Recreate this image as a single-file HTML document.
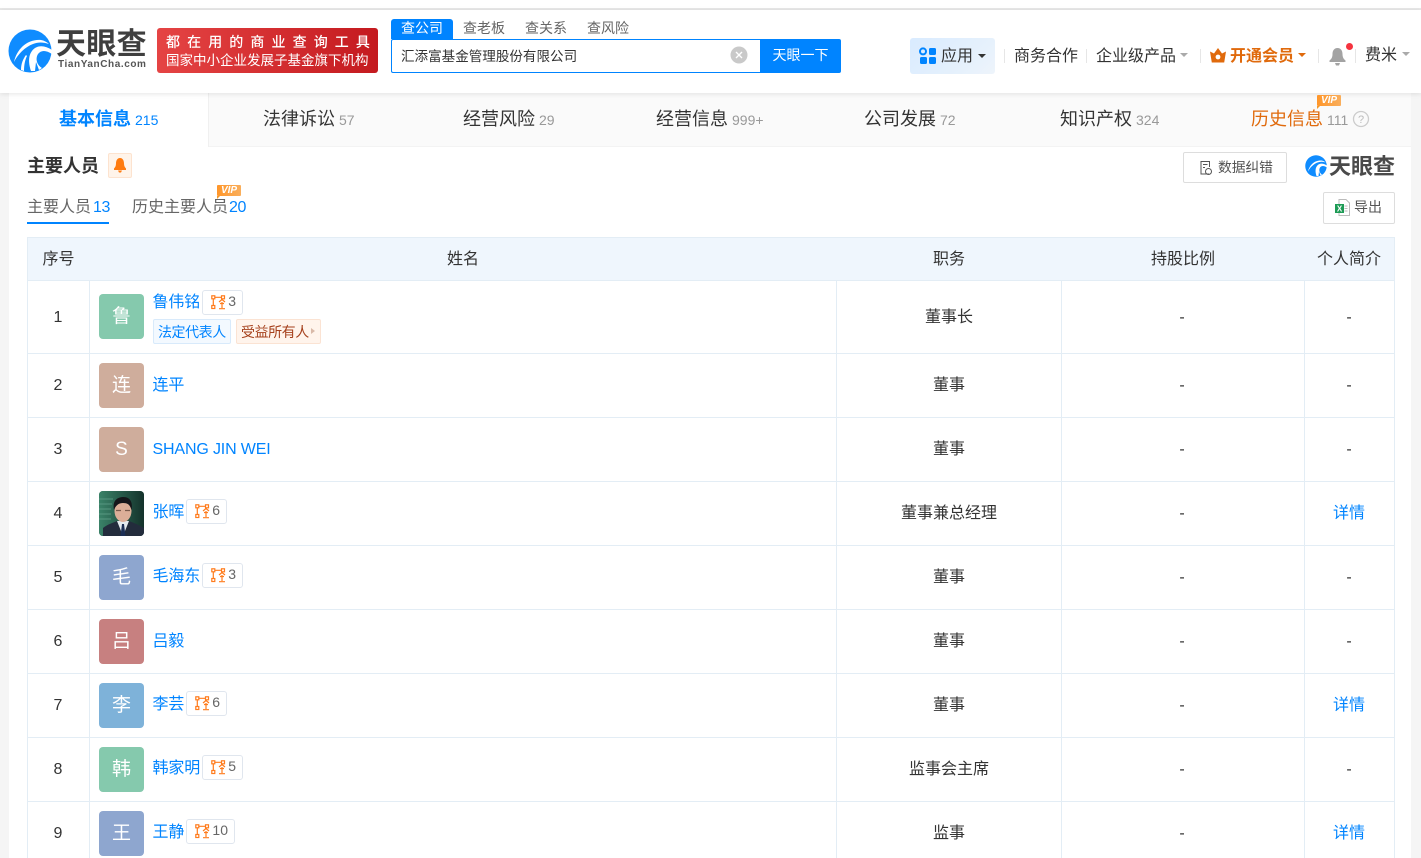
<!DOCTYPE html>
<html lang="zh"><head><meta charset="utf-8"><title>主要人员</title>
<style>
html,body{margin:0;padding:0;width:1421px;height:858px;overflow:hidden;background:#f5f5f5}
body{position:relative;font-family:"Liberation Sans","Noto Sans CJK SC",sans-serif;color:#333;font-size:16px}
.a{position:absolute;white-space:nowrap}
.t{position:absolute;white-space:nowrap;height:24px;line-height:24px;transform:translate(-50%,1px)}
.l{position:absolute;background:#e3edf5}
.av{position:absolute;left:99px;width:45px;height:45px;border-radius:4px;color:#fff;text-align:center;line-height:45px;font-size:19px;overflow:hidden}
.n{position:absolute;left:152.5px;height:24px;line-height:24px;color:#0084ff;white-space:nowrap;letter-spacing:-.15px}
.co{position:absolute;height:23px;border:1px solid #e0e6ee;border-radius:3px;background:#fff;font-size:14px;color:#666;line-height:21px;white-space:nowrap}
.co svg{position:absolute;left:8px;top:4px}
.co span{position:absolute;right:6px;top:0}
.tb{position:absolute;top:107px;height:24px;line-height:24px;font-size:18px;color:#333;white-space:nowrap}
.tb i{font-style:normal;font-size:14px;color:#999;margin-left:4px}
.tag{position:absolute;top:319px;height:23px;line-height:25px;font-size:14px;letter-spacing:-.45px;border-radius:2px;text-align:left;padding-left:4px;white-space:nowrap}
.vip{position:absolute;width:24px;height:11px;background:linear-gradient(90deg,#ff962a,#f9ae5c);border-radius:1px;color:#fff;font:italic bold 10px/11px "Liberation Sans",sans-serif;text-align:center}
.vip:after{content:"";position:absolute;left:0;bottom:-3px;border-left:3px solid #f59a2a;border-bottom:3px solid transparent}
.sep{position:absolute;top:49px;width:1px;height:14px;background:#e6e6e6}
.car{position:absolute;width:0;height:0;border:4px solid transparent;border-top:4px solid #999;border-bottom:0}
</style></head><body>

<!-- top stripes -->
<div class="a" style="left:0;top:0;width:1421px;height:8px;background:#fff"></div>
<div class="a" style="left:0;top:8px;width:1421px;height:2px;background:#e8e8e8"></div>

<!-- content panel -->
<div class="a" style="left:9px;top:93px;width:1402px;height:765px;background:#fff"></div>
<!-- tab strip -->
<div class="a" style="left:209px;top:93px;width:1202px;height:54px;background:#fafafa"></div>
<div class="a" style="left:208px;top:93px;width:1px;height:54px;background:#f0f0f0"></div>
<div class="a" style="left:209px;top:146px;width:1202px;height:1px;background:#f3f3f3"></div>

<!-- header -->
<div class="a" style="left:0;top:10px;width:1421px;height:83px;background:#fff;box-shadow:0 1px 5px rgba(0,0,0,.1)"></div>

<!-- logo -->
<svg class="a" style="left:8px;top:29px" width="44" height="44" viewBox="0 0 44 44">
<circle cx="22" cy="22" r="21.500" fill="#0f8cff"/>
<path d="M6 33C9 20 19 10 33 11C36 11.500 39 13 41 15C35 13 30 13 25 15C17 18 10 25 6 33Z" fill="#fff"/>
<path d="M23 42C20 33 20 24 27 19C32 16 38 17 44 21L44 25C38 21 33 21 30 25C27 30 29 36 34 39L31 41L28 33L27 42Z" fill="#fff"/>
<path d="M13 41C13 35 15 30 18 26L19 27C17 31 16 36 16 42Z" fill="#fff"/>
</svg>
<div class="a" style="left:56px;top:26px;font-size:30px;line-height:38px;font-weight:bold;color:#3f3f3f;letter-spacing:.3px">天眼查</div>
<div class="a" style="left:58px;top:59px;font-size:10px;line-height:12px;font-weight:bold;color:#555;letter-spacing:.58px">TianYanCha.com</div>

<!-- banner -->
<div class="a" style="left:157px;top:28px;width:221px;height:45px;border-radius:3px;background:linear-gradient(90deg,#e54444,#c41a1f)"></div>
<div class="a" style="left:166px;top:33px;font-size:14px;line-height:18px;color:#fff;letter-spacing:7.100px;font-weight:500">都在用的商业查询工具</div>
<div class="a" style="left:166px;top:52px;font-size:13.500px;line-height:18px;color:#fff">国家中小企业发展子基金旗下机构</div>

<!-- search -->
<div class="a" style="left:391px;top:19px;width:62px;height:20px;background:#0084ff;border-radius:3px 3px 0 0;color:#fff;font-size:14px;line-height:19px;text-align:center">查公司</div>
<div class="a" style="left:463px;top:19px;font-size:14px;line-height:19px;color:#666">查老板</div>
<div class="a" style="left:525px;top:19px;font-size:14px;line-height:19px;color:#666">查关系</div>
<div class="a" style="left:587px;top:19px;font-size:14px;line-height:19px;color:#666">查风险</div>
<div class="a" style="left:391px;top:39px;width:369px;height:32px;border:1px solid #0084ff;border-right:0;border-radius:2px 0 0 2px;background:#fff"></div>
<div class="a" style="left:401px;top:46px;font-size:13.550px;line-height:22px;color:#333">汇添富基金管理股份有限公司</div>
<svg class="a" style="left:730px;top:46px" width="18" height="18" viewBox="0 0 18 18"><circle cx="9" cy="9" r="8.500" fill="#c9c9c9"/><path d="M6 6l6 6M12 6l-6 6" stroke="#fff" stroke-width="1.400"/></svg>
<div class="a" style="left:760px;top:39px;width:81px;height:34px;background:#0084ff;border-radius:0 2px 2px 0;color:#fff;font-size:14px;line-height:33px;text-align:center">天眼一下</div>

<!-- nav -->
<div class="a" style="left:910px;top:38px;width:85px;height:36px;border-radius:3px;background:linear-gradient(135deg,#d9ebff,#e6f1fc 70%,#eef4fb)"></div>
<svg class="a" style="left:919px;top:47px" width="18" height="18" viewBox="0 0 18 18" fill="#0084ff"><circle cx="4" cy="4.400" r="3" fill="none" stroke="#0084ff" stroke-width="2"/><rect x="10" y="1" width="7" height="7" rx="1.500"/><rect x="1" y="10" width="7" height="7" rx="1.500"/><rect x="10" y="10" width="7" height="7" rx="1.500"/></svg>
<div class="a" style="left:941px;top:45px;line-height:24px;color:#333">应用</div>
<div class="car" style="left:978px;top:54px;border-top-color:#333"></div>
<div class="sep" style="left:1004px"></div>
<div class="a" style="left:1014px;top:45px;line-height:24px;color:#333">商务合作</div>
<div class="sep" style="left:1086px"></div>
<div class="a" style="left:1096px;top:45px;line-height:24px;color:#333">企业级产品</div>
<div class="car" style="left:1180px;top:53px;border-top-color:#aaa"></div>
<div class="sep" style="left:1200px"></div>
<svg class="a" style="left:1210px;top:48px" width="16" height="15" viewBox="0 0 16 15"><path d="M0 3.500L4 5.500 8 0l4 5.500 4-2-1.800 11H1.800Z" fill="#e06a0c"/><circle cx="8" cy="9" r="2.400" fill="#fff"/></svg>
<div class="a" style="left:1230px;top:45px;line-height:24px;color:#e06a0c;font-weight:bold">开通会员</div>
<div class="car" style="left:1298px;top:53px;border-top-color:#e06a0c"></div>
<div class="sep" style="left:1318px"></div>
<svg class="a" style="left:1329px;top:47px" width="17" height="19" viewBox="0 0 17 19"><path d="M8.500 1C5 1 3.500 4 3.500 7c0 3-1 5-3 6.500V15h16v-1.500c-2-1.500-3-3.500-3-6.500 0-3-1.500-6-5-6Z" fill="#a3a3a3"/><path d="M6 16h5L10 18.500H7Z" fill="#a3a3a3"/></svg>
<div class="a" style="left:1346px;top:43px;width:7px;height:7px;border-radius:50%;background:#f5333f"></div>
<div class="sep" style="left:1355px"></div>
<div class="a" style="left:1365px;top:44px;line-height:24px;color:#333">费米</div>
<div class="car" style="left:1402px;top:52px;border-top-color:#aaa"></div>

<!-- tabs -->
<div class="tb" style="left:59px;color:#0084ff;font-weight:bold">基本信息<i style="color:#0084ff;font-weight:normal">215</i></div>
<div class="tb" style="left:263px">法律诉讼<i>57</i></div>
<div class="tb" style="left:463px">经营风险<i>29</i></div>
<div class="tb" style="left:656px">经营信息<i>999+</i></div>
<div class="tb" style="left:864px">公司发展<i>72</i></div>
<div class="tb" style="left:1060px">知识产权<i>324</i></div>
<div class="tb" style="left:1251px;color:#e06a0c">历史信息<i>111</i></div>
<div class="vip" style="left:1317px;top:95px">VIP</div>
<svg class="a" style="left:1352px;top:110px" width="18" height="18" viewBox="0 0 18 18"><circle cx="9" cy="9" r="7.500" fill="none" stroke="#ccc" stroke-width="1.300"/><text x="9" y="13" text-anchor="middle" font-family="Liberation Sans" font-size="11" fill="#bbb">?</text></svg>

<!-- section head -->
<div class="a" style="left:27px;top:154px;font-size:18px;line-height:24px;font-weight:bold;color:#333">主要人员</div>
<div class="a" style="left:108px;top:153px;width:22px;height:23px;background:#fff4ea;border:1px solid #fde3cf;border-radius:2px"></div>
<svg class="a" style="left:113px;top:158px" width="14" height="15" viewBox="0 0 14 15"><path d="M7 0C4 0 3 3 3 5.500 3 8 2 9.500 1 10.500V12h12v-1.500C12 9.500 11 8 11 5.500 11 3 10 0 7 0Z" fill="#ff7b0f"/><path d="M5 12.500h4L8 14.500H6Z" fill="#ff7b0f"/></svg>
<div class="a" style="left:27px;top:196px;line-height:24px;color:#666">主要人员<span style="color:#0084ff;margin-left:2px;letter-spacing:-.4px">13</span></div>
<div class="a" style="left:27px;top:222px;width:82px;height:2px;background:#0084ff"></div>
<div class="a" style="left:132px;top:196px;line-height:24px;color:#666">历史主要人员<span style="color:#0084ff;margin-left:1px;letter-spacing:-.4px">20</span></div>
<div class="vip" style="left:217px;top:185px">VIP</div>

<div class="a" style="left:1183px;top:152px;width:102px;height:29px;border:1px solid #ddd;border-radius:2px;background:#fff"></div>
<svg class="a" style="left:1199px;top:160px" width="15" height="16" viewBox="0 0 15 16" fill="none" stroke="#555"><path d="M10 14H2V1.500h8.500V7"/><path d="M4 4.500h4.500M4 7.500h2"/><circle cx="9.500" cy="11.500" r="3"/></svg>
<div class="a" style="left:1218px;top:158px;font-size:13.800px;line-height:20px;color:#555;letter-spacing:-.1px">数据纠错</div>
<svg class="a" style="left:1305px;top:155px" width="22" height="22" viewBox="0 0 44 44"><circle cx="22" cy="22" r="21.500" fill="#0f8cff"/><path d="M6 33C9 20 19 10 33 11C36 11.500 39 13 41 15C35 13 30 13 25 15C17 18 10 25 6 33Z" fill="#fff"/><path d="M23 42C20 33 20 24 27 19C32 16 38 17 44 21L44 25C38 21 33 21 30 25C27 30 29 36 34 39L31 41L28 33L27 42Z" fill="#fff"/></svg>
<div class="a" style="left:1329px;top:153px;font-size:22px;line-height:28px;font-weight:bold;color:#4a4a4a">天眼查</div>

<div class="a" style="left:1323px;top:192px;width:70px;height:30px;border:1px solid #ddd;border-radius:2px;background:#fff"></div>
<svg class="a" style="left:1335px;top:199px" width="15" height="17" viewBox="0 0 15 17"><path d="M4 .5h7l3.500 3.500v12.500H4Z" fill="#fff" stroke="#bbb"/><path d="M9.500 7h3M9.500 9.500h3M9.500 12h3" stroke="#bbb"/><rect x="0" y="5" width="9" height="9" fill="#1d9b55"/><text x="4.500" y="12.500" text-anchor="middle" font-family="Liberation Sans" font-weight="bold" font-size="8" fill="#fff">X</text></svg>
<div class="a" style="left:1354px;top:197px;font-size:14px;line-height:20px;color:#555">导出</div>

<!-- table -->
<div class="a" style="left:27px;top:237px;width:1368px;height:43px;background:#eff6fd"></div>
<div class="l" style="left:27px;top:237px;width:1368px;height:1px"></div>
<div class="l" style="left:27px;top:280px;width:1368px;height:1px"></div>
<div class="l" style="left:27px;top:353px;width:1368px;height:1px"></div>
<div class="l" style="left:27px;top:417px;width:1368px;height:1px"></div>
<div class="l" style="left:27px;top:481px;width:1368px;height:1px"></div>
<div class="l" style="left:27px;top:545px;width:1368px;height:1px"></div>
<div class="l" style="left:27px;top:609px;width:1368px;height:1px"></div>
<div class="l" style="left:27px;top:673px;width:1368px;height:1px"></div>
<div class="l" style="left:27px;top:737px;width:1368px;height:1px"></div>
<div class="l" style="left:27px;top:801px;width:1368px;height:1px"></div>
<div class="l" style="left:27px;top:237px;width:1px;height:621px"></div>
<div class="l" style="left:1394px;top:237px;width:1px;height:621px"></div>
<div class="l" style="left:89px;top:281px;width:1px;height:577px"></div>
<div class="l" style="left:836px;top:281px;width:1px;height:577px"></div>
<div class="l" style="left:1061px;top:281px;width:1px;height:577px"></div>
<div class="l" style="left:1304px;top:281px;width:1px;height:577px"></div>

<div class="t" style="left:58.500px;top:247px">序号</div>
<div class="t" style="left:463px;top:247px">姓名</div>
<div class="t" style="left:949px;top:247px">职务</div>
<div class="t" style="left:1183px;top:247px">持股比例</div>
<div class="t" style="left:1349px;top:247px">个人简介</div>

<!-- rows -->
<div class="t" style="left:58px;top:305px">1</div><div class="t" style="left:949px;top:305px">董事长</div><div class="t" style="left:1182px;top:305px">-</div><div class="t" style="left:1349px;top:305px">-</div>
<div class="t" style="left:58px;top:373px">2</div><div class="t" style="left:949px;top:373px">董事</div><div class="t" style="left:1182px;top:373px">-</div><div class="t" style="left:1349px;top:373px">-</div>
<div class="t" style="left:58px;top:437px">3</div><div class="t" style="left:949px;top:437px">董事</div><div class="t" style="left:1182px;top:437px">-</div><div class="t" style="left:1349px;top:437px">-</div>
<div class="t" style="left:58px;top:501px">4</div><div class="t" style="left:949px;top:501px">董事兼总经理</div><div class="t" style="left:1182px;top:501px">-</div><div class="t" style="left:1349px;top:501px;color:#0084ff">详情</div>
<div class="t" style="left:58px;top:565px">5</div><div class="t" style="left:949px;top:565px">董事</div><div class="t" style="left:1182px;top:565px">-</div><div class="t" style="left:1349px;top:565px">-</div>
<div class="t" style="left:58px;top:629px">6</div><div class="t" style="left:949px;top:629px">董事</div><div class="t" style="left:1182px;top:629px">-</div><div class="t" style="left:1349px;top:629px">-</div>
<div class="t" style="left:58px;top:693px">7</div><div class="t" style="left:949px;top:693px">董事</div><div class="t" style="left:1182px;top:693px">-</div><div class="t" style="left:1349px;top:693px;color:#0084ff">详情</div>
<div class="t" style="left:58px;top:757px">8</div><div class="t" style="left:949px;top:757px">监事会主席</div><div class="t" style="left:1182px;top:757px">-</div><div class="t" style="left:1349px;top:757px">-</div>
<div class="t" style="left:58px;top:821px">9</div><div class="t" style="left:949px;top:821px">监事</div><div class="t" style="left:1182px;top:821px">-</div><div class="t" style="left:1349px;top:821px;color:#0084ff">详情</div>

<!-- avatars -->
<div class="av" style="top:294px;background:#85c9ad;line-height:46px">鲁</div>
<div class="av" style="top:363px;background:#cfad9c">连</div>
<div class="av" style="top:427px;background:#cfad9c;line-height:46px">S</div>
<div class="av" style="top:491px;background:#2f5f50">
<svg width="45" height="45" viewBox="0 0 45 45" style="display:block"><defs><linearGradient id="bg" x1="0" y1="0" x2="1" y2="0"><stop offset="0" stop-color="#3a8268"/><stop offset="1" stop-color="#14322b"/></linearGradient></defs><rect width="45" height="45" fill="url(#bg)"/><path d="M0 8h14M0 13h13M0 18h12M0 23h12M0 28h12" stroke="#5d9c85" stroke-width="1.500" opacity=".6"/><path d="M4 45V37C9 33 14 32 18 30H30C35 32 40 34 45 37V45Z" fill="#232c3c"/><path d="M18 30L24 45 30 30Z" fill="#e4eaee"/><path d="M23 33L21.500 45H26.500L25 33Z" fill="#1c2f55"/><ellipse cx="24" cy="20" rx="8.500" ry="11" fill="#dcae98"/><path d="M15 19C13 9 19 6 24.500 6 31 6 34 11 32.500 19 31 14 29 12 24 12 20 12 17 14 15 19Z" fill="#15161a"/><path d="M17 19.500h5M26 19.500h5" stroke="#7a5a4c" stroke-width="1.300"/></svg>
</div>
<div class="av" style="top:555px;background:#8ea6cf">毛</div>
<div class="av" style="top:619px;background:#c78080">吕</div>
<div class="av" style="top:683px;background:#7eb2d9">李</div>
<div class="av" style="top:747px;background:#85c9ad">韩</div>
<div class="av" style="top:811px;background:#8ea6cf">王</div>

<!-- names -->
<div class="n" style="top:291px">鲁伟铭</div>
<div class="n" style="top:374px">连平</div>
<div class="n" style="top:438px">SHANG JIN WEI</div>
<div class="n" style="top:501px">张晖</div>
<div class="n" style="top:565px">毛海东</div>
<div class="n" style="top:630px">吕毅</div>
<div class="n" style="top:693px">李芸</div>
<div class="n" style="top:757px">韩家明</div>
<div class="n" style="top:821px">王静</div>

<!-- company badges -->
<div class="co" style="left:202px;top:290px;width:39px"><svg width="15" height="15" viewBox="0 0 15 15" fill="none" stroke="#ff7b1c" stroke-width="1.200"><rect x=".8" y=".8" width="3" height="3"/><rect x="10.500" y=".8" width="3" height="3"/><rect x=".8" y="10.500" width="3" height="3"/><path d="M3.800 2.300h6.700M2.300 3.800v6.700M8 7l3-2.500 3 2.500M9 8.500h4M11 7v6M8 13.700h6"/></svg><span>3</span></div>
<div class="co" style="left:186px;top:499px;width:39px"><svg width="15" height="15" viewBox="0 0 15 15" fill="none" stroke="#ff7b1c" stroke-width="1.200"><rect x=".8" y=".8" width="3" height="3"/><rect x="10.500" y=".8" width="3" height="3"/><rect x=".8" y="10.500" width="3" height="3"/><path d="M3.800 2.300h6.700M2.300 3.800v6.700M8 7l3-2.500 3 2.500M9 8.500h4M11 7v6M8 13.700h6"/></svg><span>6</span></div>
<div class="co" style="left:202px;top:563px;width:39px"><svg width="15" height="15" viewBox="0 0 15 15" fill="none" stroke="#ff7b1c" stroke-width="1.200"><rect x=".8" y=".8" width="3" height="3"/><rect x="10.500" y=".8" width="3" height="3"/><rect x=".8" y="10.500" width="3" height="3"/><path d="M3.800 2.300h6.700M2.300 3.800v6.700M8 7l3-2.500 3 2.500M9 8.500h4M11 7v6M8 13.700h6"/></svg><span>3</span></div>
<div class="co" style="left:186px;top:691px;width:39px"><svg width="15" height="15" viewBox="0 0 15 15" fill="none" stroke="#ff7b1c" stroke-width="1.200"><rect x=".8" y=".8" width="3" height="3"/><rect x="10.500" y=".8" width="3" height="3"/><rect x=".8" y="10.500" width="3" height="3"/><path d="M3.800 2.300h6.700M2.300 3.800v6.700M8 7l3-2.500 3 2.500M9 8.500h4M11 7v6M8 13.700h6"/></svg><span>6</span></div>
<div class="co" style="left:202px;top:755px;width:39px"><svg width="15" height="15" viewBox="0 0 15 15" fill="none" stroke="#ff7b1c" stroke-width="1.200"><rect x=".8" y=".8" width="3" height="3"/><rect x="10.500" y=".8" width="3" height="3"/><rect x=".8" y="10.500" width="3" height="3"/><path d="M3.800 2.300h6.700M2.300 3.800v6.700M8 7l3-2.500 3 2.500M9 8.500h4M11 7v6M8 13.700h6"/></svg><span>5</span></div>
<div class="co" style="left:186px;top:819px;width:47px"><svg width="15" height="15" viewBox="0 0 15 15" fill="none" stroke="#ff7b1c" stroke-width="1.200"><rect x=".8" y=".8" width="3" height="3"/><rect x="10.500" y=".8" width="3" height="3"/><rect x=".8" y="10.500" width="3" height="3"/><path d="M3.800 2.300h6.700M2.300 3.800v6.700M8 7l3-2.500 3 2.500M9 8.500h4M11 7v6M8 13.700h6"/></svg><span>10</span></div>

<!-- tags -->
<div class="tag" style="left:153px;width:72px;background:#f3f9ff;border:1px solid #d8eafb;color:#0084ff">法定代表人</div>
<div class="tag" style="left:236px;width:79px;background:#fff4ec;border:1px solid #fbe3d3;color:#a5401c">受益所有人</div>
<div class="a" style="left:311px;top:328px;width:0;height:0;border:3px solid transparent;border-left:4px solid #d9b9a8"></div>

</body></html>
